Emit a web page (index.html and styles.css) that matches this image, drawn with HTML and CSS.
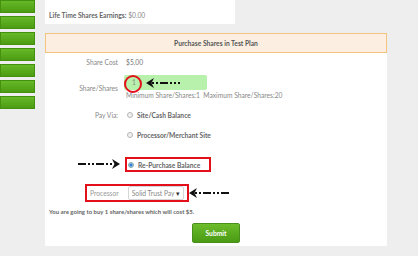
FILE: index.html
```html
<!DOCTYPE html>
<html>
<head>
<meta charset="utf-8">
<link rel="stylesheet" href="styles.css">
</head>
<body>
<div class="page">
  <nav class="side">
    <div class="bar"></div><div class="bar"></div><div class="bar"></div><div class="bar"></div>
    <div class="bar"></div><div class="bar"></div><div class="bar"></div>
  </nav>
  <main class="content">
    <div class="summary"><b>Life Time Shares Earnings:</b> $0.00</div>
    <section class="panel">
      <h2 class="panel-head">Purchase Shares in Test Plan</h2>
      <div class="row row-cost"><span class="lbl">Share Cost</span><span class="val">$5.00</span></div>
      <div class="row row-share">
        <span class="lbl">Share/Shares</span>
        <div class="sharecol">
          <div class="qty">1</div>
          <div class="minmax">Minimum Share/Shares:1&nbsp; Maximum Share/Shares:20</div>
        </div>
        <span class="circle"></span>
        <svg class="arrow arrow-share" width="34" height="10" viewBox="0 0 34 10"><polygon points="0,5 8,0 5.5,5 8,10" fill="#111"/><line x1="6" y1="5" x2="34" y2="5" stroke="#111" stroke-width="2" stroke-dasharray="2 2 2 2 8 2"/></svg>
      </div>
      <div class="row row-pay"><span class="lbl">Pay Via:</span><span class="radio"></span><b class="opt">Site/Cash Balance</b></div>
      <div class="row row-opt2"><span class="lbl"></span><span class="radio"></span><b class="opt">Processor/Merchant Site</b></div>
      <div class="row row-opt3">
        <span class="lbl"></span>
        <div class="hl"><span class="radio on"></span><b class="opt">Re-Purchase Balance</b></div>
        <svg class="arrow arrow-opt" width="42" height="10" viewBox="0 0 42 10"><line x1="0" y1="5" x2="36" y2="5" stroke="#111" stroke-width="2" stroke-dasharray="8 2 2 2 2 2"/><polygon points="42,5 34,0 36.5,5 34,10" fill="#111"/></svg>
      </div>
      <div class="proc">
        <span class="proc-lbl">Processor</span>
        <span class="select">Solid Trust Pay <span class="caret">▾</span></span>
        <svg class="arrow arrow-proc" width="40" height="10" viewBox="0 0 40 10"><polygon points="0,5 8,0 5.5,5 8,10" fill="#111"/><line x1="6" y1="5" x2="40" y2="5" stroke="#111" stroke-width="2" stroke-dasharray="2 2 2 2 8 2"/></svg>
      </div>
      <p class="buy">You are going to buy 1 share/shares which will cost $5.</p>
      <div class="actions"><button class="submit">Submit</button></div>
    </section>
  </main>
</div>
</body>
</html>
```
FILE: styles.css
```css
* { box-sizing: border-box; }
body {
  margin: 0;
  background: #eeeeee;
  font-family: Lato, "Open Sans", "Liberation Sans", sans-serif;
  font-size: 6.7px;
  color: #777;
  white-space: nowrap;
}
.page { display: flex; align-items: flex-start; }
.side { width: 35px; display: flex; flex-direction: column; gap: 3px; }
.bar {
  height: 13px;
  background: linear-gradient(#66b926, #4c9c14);
  border: 1px solid #45900f;
}
.content { margin-left: 10px; display: flex; flex-direction: column; }
.summary {
  width: 190px;
  height: 24px;
  background: #fff;
  padding: 9px 0 0 4px;
  line-height: 12px;
  color: #888;
}
.summary b { color: #666; }
.panel {
  margin-top: 9px;
  width: 342px;
  height: 213px;
  background: #fff;
}
.panel-head {
  margin: 0;
  height: 20px;
  border: 1px solid #f6c27f;
  background: #fcefe1;
  font-size: 6.7px;
  line-height: 18px;
  text-align: center;
  color: #555;
}
.row { display: flex; align-items: center; position: relative; line-height: 12px; }
.lbl { width: 73px; text-align: right; margin-right: 6px; color: #888; flex: none; }
.val { padding-left: 2px; }
.row-cost { margin-top: 3px; }
.row-share { margin-top: 7px; }
.sharecol { display: flex; flex-direction: column; }
.qty {
  width: 83px;
  height: 15px;
  background: #b7f1ab;
  border-radius: 2px;
  line-height: 15px;
  padding-left: 8px;
  color: #888;
}
.minmax { line-height: 11px; padding-left: 2px; color: #888; }
.circle {
  position: absolute;
  left: 79px;
  top: 0;
  width: 18px;
  height: 18px;
  border: 2px solid #e3101c;
  border-radius: 50%;
}
.arrow { position: absolute; }
.arrow-share { left: 101px; top: 3px; }
.radio {
  width: 6px;
  height: 6px;
  border: 1px solid #b5b5b5;
  border-radius: 50%;
  background: #f2f2f2;
  margin: 0 4px 0 3px;
  flex: none;
}
.radio.on { background: radial-gradient(circle, #2f7fd6 45%, #9cc3ee 60%); border-color: #8aa; }
.opt { color: #666; }
.row-pay { margin-top: 8px; }
.row-opt2 { margin-top: 8px; }
.row-opt3 { margin-top: 16px; }
.hl {
  display: flex;
  align-items: center;
  height: 15px;
  border: 2px solid #e3101c;
  margin-left: 1px;
  padding-right: 9px;
}
.hl .radio { margin-left: 1px; }
.arrow-opt { left: 33px; top: 2px; }
.proc {
  position: relative;
  align-self: flex-start;
  margin: 12px 0 0 40px;
  height: 18px;
  border: 2px solid #e3101c;
  display: inline-flex;
  align-items: center;
  gap: 9px;
  padding: 0 3px 0 3px;
}
.proc-lbl { color: #999; }
.select {
  height: 14px;
  line-height: 12px;
  border: 1px solid #d6d6d6;
  border-radius: 2px;
  padding: 0 3px;
  color: #888;
}
.caret { color: #333; }
.arrow-proc { left: calc(100% + 2px); top: 2px; }
.buy {
  margin: 4px 0 0;
  padding-left: 4px;
  line-height: 12px;
  font-size: 6px;
  font-weight: bold;
  color: #666;
}
.actions { display: flex; justify-content: center; margin-top: 5px; }
.submit {
  width: 48px;
  height: 20px;
  border: 1px solid #4a8f1c;
  border-radius: 2px;
  background: linear-gradient(#6cbc2b, #4a9a14);
  color: #fff;
  font-family: inherit;
  font-size: 6.7px;
  font-weight: bold;
  padding: 0;
}
```
